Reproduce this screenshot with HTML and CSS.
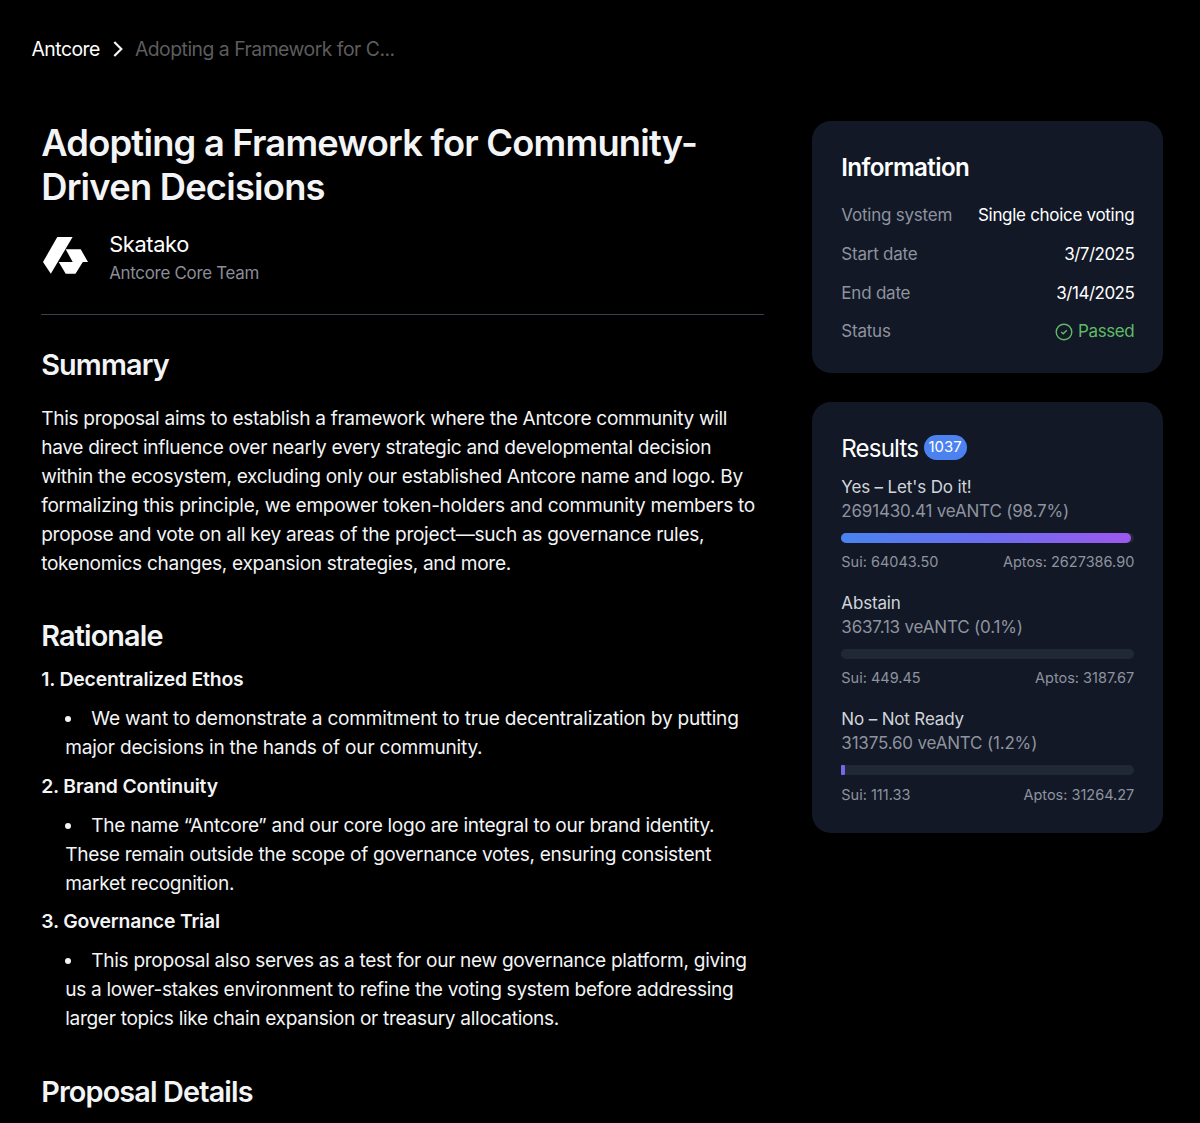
FILE: index.html
```html
<!DOCTYPE html>
<html lang="en">
<head>
    <meta charset="UTF-8">
    <meta name="viewport" content="width=device-width, initial-scale=1.0">
    <title>Antcore - Adopting a Framework for Community-Driven Decisions</title>
    <link rel="stylesheet" href="styles.css">
</head>
<body>

    <nav class="breadcrumb">
        <a href="#" class="crumb-home">Antcore</a>
        <svg class="crumb-arrow" viewBox="0 0 10 16" fill="none" stroke="currentColor" stroke-width="2.2">
            <path d="M1.3 1l7 7-7 7" />
        </svg>
        <span class="crumb-current">Adopting a Framework for C...</span>
    </nav>

    <div class="layout">
        <main class="proposal">
            <h1>Adopting a Framework for Community-<br>Driven Decisions</h1>

            <div class="author">
                <svg class="author-logo" viewBox="0 0 45 37" fill="#fff">
                    <path d="M14.3 0H29.6L7.8 36.8L0 25Z" />
                    <path d="M22.7 12.3H37.7L45 25H39.8L32.5 36.8H22.7L15.7 25H29.7Z" />
                </svg>
                <div>
                    <div class="author-name">Skatako</div>
                    <div class="author-team">Antcore Core Team</div>
                </div>
            </div>

            <h2 class="summary-title">Summary</h2>
            <p>This proposal aims to establish a framework where the Antcore community will<br>
                have direct influence over nearly every strategic and developmental decision<br>
                within the ecosystem, excluding only our established Antcore name and logo. By<br>
                formalizing this principle, we empower token-holders and community members to<br>
                propose and vote on all key areas of the project—such as governance rules,<br>
                tokenomics changes, expansion strategies, and more.</p>

            <h2 class="rationale-title">Rationale</h2>
            <h3>1. Decentralized Ethos</h3>
            <ul>
                <li class="wide">We want to demonstrate a commitment to true decentralization by putting<br>
                    major decisions in the hands of our community.</li>
            </ul>
            <h3>2. Brand Continuity</h3>
            <ul>
                <li>The name “Antcore” and our core logo are integral to our brand identity.<br>
                    These remain outside the scope of governance votes, ensuring consistent<br>
                    market recognition.</li>
            </ul>
            <h3>3. Governance Trial</h3>
            <ul>
                <li>This proposal also serves as a test for our new governance platform, giving<br>
                    us a lower-stakes environment to refine the voting system before addressing<br>
                    larger topics like chain expansion or treasury allocations.</li>
            </ul>

            <h2 class="details-title">Proposal Details</h2>
        </main>

        <aside class="sidebar">
            <section class="card info-card">
                <h4>Information</h4>
                <div class="info-row"><span>Voting system</span><b>Single choice voting</b></div>
                <div class="info-row"><span>Start date</span><b class="date">3/7/2025</b></div>
                <div class="info-row"><span>End date</span><b class="date">3/14/2025</b></div>
                <div class="info-row">
                    <span>Status</span>
                    <b class="passed">
                        <svg viewBox="0 0 18 18" fill="none" stroke="currentColor" stroke-width="1.4">
                            <circle cx="9" cy="9" r="7.8" />
                            <path d="M6.2 9l2 1.8 3.6-3.5" />
                        </svg>
                        Passed
                    </b>
                </div>
            </section>

            <section class="card results-card">
                <div class="results-head">
                    <h4>Results</h4>
                    <span class="count">1037</span>
                </div>

                <div class="option">
                    <div class="option-name">Yes – Let's Do it!</div>
                    <div class="option-votes">2691430.41 veANTC (98.7%)</div>
                    <div class="bar"><div class="bar-fill" style="width: 98.7%"></div></div>
                    <div class="chains"><span>Sui: 64043.50</span><span>Aptos: 2627386.90</span></div>
                </div>

                <div class="option">
                    <div class="option-name">Abstain</div>
                    <div class="option-votes">3637.13 veANTC (0.1%)</div>
                    <div class="bar"></div>
                    <div class="chains"><span>Sui: 449.45</span><span>Aptos: 3187.67</span></div>
                </div>

                <div class="option">
                    <div class="option-name">No – Not Ready</div>
                    <div class="option-votes">31375.60 veANTC (1.2%)</div>
                    <div class="bar"><div class="bar-fill bar-small" style="width: 1.2%"></div></div>
                    <div class="chains"><span>Sui: 111.33</span><span>Aptos: 31264.27</span></div>
                </div>
            </section>
        </aside>
    </div>

</body>
</html>
```
FILE: styles.css
```css
/* General Styles */
* {
    box-sizing: border-box;
    margin: 0;
    padding: 0;
}

body {
    font-family: Inter, "Liberation Sans", sans-serif;
    font-size: 19.36px;
    line-height: 29.04px;
    background-color: #000;
    color: #f3f4f6;
    height: 1123px;
    overflow: hidden;
    white-space: nowrap;
}

.breadcrumb {
    display: flex;
    align-items: center;
    padding: 35px 0 0 31.5px;
    letter-spacing: -0.5px;
}

.crumb-home {
    color: #fff;
    text-decoration: none;
}

.crumb-arrow {
    width: 10px;
    height: 16px;
    margin: -2px 12px 0 13px;
}

.crumb-current {
    color: #5c5c5e;
}

.layout {
    display: flex;
    align-items: flex-start;
    justify-content: space-between;
    padding: 57.3px 36.7px 0 41.2px;
}

/* Proposal text */
.proposal {
    width: 723px;
}

.proposal p,
.proposal li {
    font-size: 19.1px;
    letter-spacing: -0.31px;
}

.proposal li.wide {
    letter-spacing: -0.22px;
}

h1 {
    font-size: 36.3px;
    line-height: 43.56px;
    font-weight: 600;
    letter-spacing: -0.77px;
    padding-top: 1px;
}

.author {
    display: flex;
    align-items: center;
    gap: 21px;
    height: 106px;
    padding: 0 0 10px 2px;
    border-bottom: 1px solid #374151;
}

.author-logo {
    width: 45px;
    height: 37px;
    margin-bottom: 2px;
}

.author-name {
    font-size: 21.8px;
    color: #fff;
    letter-spacing: -0.35px;
    padding-top: 4px;
}

.author-team {
    font-size: 16.9px;
    letter-spacing: -0.27px;
    color: #8b8d97;
}

h2 {
    font-size: 28.8px;
    line-height: 36px;
    font-weight: 600;
    letter-spacing: -0.85px;
}

.summary-title {
    margin-top: 31.5px;
    margin-bottom: 20.7px;
}

.rationale-title {
    margin-top: 40.5px;
    margin-bottom: 11px;
}

h3 {
    font-size: 19.36px;
    line-height: 29.04px;
    font-weight: 600;
    letter-spacing: -0.18px;
    margin-bottom: 9.68px;
}

ul {
    list-style-position: inside;
    padding-left: 24px;
    margin-bottom: 9.68px;
}

.details-title {
    margin-top: 40.5px;
}

/* Sidebar */
.sidebar {
    width: 351px;
    display: flex;
    flex-direction: column;
    gap: 29.5px;
}

.card {
    background-color: #121826;
    border-radius: 19px;
    padding: 29px;
}

h4 {
    font-size: 24.2px;
    line-height: 34px;
    font-weight: 600;
    letter-spacing: -0.65px;
    color: #fff;
}

.info-card {
    height: 251.3px;
    padding-top: 30px;
}

.info-card h4 {
    margin-bottom: 16px;
}

.info-row {
    display: flex;
    justify-content: space-between;
    align-items: center;
    height: 29px;
    margin-bottom: 9.7px;
    font-size: 17px;
    letter-spacing: -0.22px;
    color: #8e939e;
}

.info-row b {
    display: flex;
    align-items: center;
    gap: 5px;
    font-weight: 400;
    letter-spacing: -0.3px;
    color: #fff;
}

.info-row .date {
    letter-spacing: -0.5px;
}

.info-row .passed {
    letter-spacing: -0.4px;
    color: #5fbb66;
}

.passed svg {
    width: 18px;
    height: 18px;
}

.results-card {
    height: 430.5px;
    padding-top: 29.7px;
}

.results-head {
    display: flex;
    align-items: center;
    gap: 5.5px;
    height: 34px;
    margin-bottom: 9px;
}

.results-head h4 {
    font-weight: 400;
    letter-spacing: -0.9px;
}

.count {
    height: 25px;
    padding: 0 5px;
    margin-bottom: 2px;
    border-radius: 12.5px;
    background-color: #4b82f0;
    color: #fff;
    font-size: 14.9px;
    line-height: 24px;
}

.option {
    height: 116.2px;
    font-size: 17px;
    line-height: 24.2px;
}

.option-name {
    letter-spacing: -0.15px;
    color: #d1d5db;
}

.option-votes {
    letter-spacing: -0.18px;
    color: #8e939e;
}

.bar {
    height: 10px;
    margin: 9.5px 0 4.5px;
    border-radius: 5px;
    background-color: #202836;
}

.bar-fill {
    height: 10px;
    border-radius: 5px;
    background: linear-gradient(to right, #4a83f0, #6b6df0 50%, #9d58ee);
}

.bar-small {
    border-radius: 1px;
    background: #7269e4;
}

.chains {
    display: flex;
    justify-content: space-between;
    font-size: 14.5px;
    line-height: 29px;
    color: #8e939e;
}
```
